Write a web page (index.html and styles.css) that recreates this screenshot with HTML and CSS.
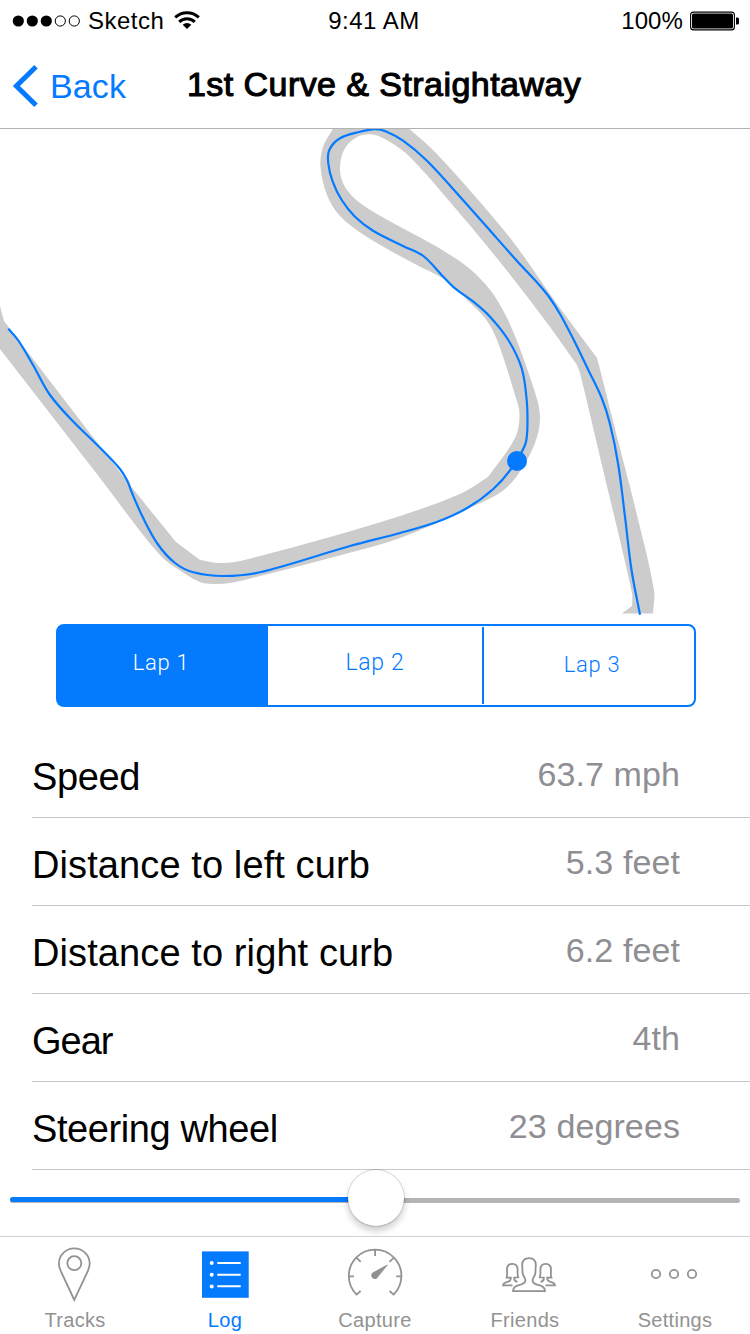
FILE: index.html
```html
<!DOCTYPE html>
<html lang="en">
<head>
<meta charset="utf-8">
<title>1st Curve &amp; Straightaway</title>
<link rel="stylesheet" href="styles.css">
</head>
<body>
<div class="screen">
  <header class="header">
    <div class="status">
      <div class="carrier">
        <svg class="signal" width="70" height="14" viewBox="0 0 70 14">
          <circle cx="6.3" cy="7" r="5.6"/><circle cx="20.3" cy="7" r="5.6"/><circle cx="34.3" cy="7" r="5.6"/>
          <circle class="off" cx="48.3" cy="7" r="5.1"/><circle class="off" cx="62.3" cy="7" r="5.1"/>
        </svg>
        <span class="carrier-name">Sketch</span>
        <svg class="wifi" width="26" height="18" viewBox="0 0 26 18">
          <path class="arc" d="M1.2 6.4A17 17 0 0 1 24.8 6.4"/>
          <path class="arc" d="M5.2 10.9A11 11 0 0 1 20.8 10.9"/>
          <path d="M13 17.9L8.7 13.8A6.2 6.2 0 0 1 17.3 13.8Z"/>
        </svg>
      </div>
      <div class="clock">9:41 AM</div>
      <div class="power">
        <span>100%</span>
        <svg width="50" height="20" viewBox="0 0 50 20">
          <rect class="shell" x=".6" y="1.1" width="43.8" height="17.8" rx="3"/>
          <rect x="2" y="2.6" width="41" height="14.8" rx="1.5"/>
          <path d="M46 6.5h1.4q1.6 0 1.6 1.6v3.8q0 1.6-1.6 1.6H46z"/>
        </svg>
      </div>
    </div>
    <nav class="nav">
      <a class="back">
        <svg width="26" height="42" viewBox="0 0 26 42"><path d="M24 1.8L4.4 21L24 40.2"/></svg>
        <span>Back</span>
      </a>
      <h1 class="title">1st Curve &amp; Straightaway</h1>
    </nav>
  </header>

  <svg class="map" width="750" height="486" viewBox="0 129 750 486">
    <path id="road" class="road"/>
    <path id="line" class="line"/>
    <circle class="car" cx="517" cy="461" r="10"/>
  </svg>

  <div class="laps">
    <div class="lap lap-on">Lap 1</div>
    <div class="lap lap-mid">Lap 2</div>
    <div class="lap lap-last">Lap 3</div>
  </div>

  <div class="rows">
    <div class="row"><span class="label snug">Speed</span><span class="value">63.7 mph</span></div>
    <div class="row"><span class="label">Distance to left curb</span><span class="value">5.3 feet</span></div>
    <div class="row"><span class="label">Distance to right curb</span><span class="value">6.2 feet</span></div>
    <div class="row"><span class="label tight">Gear</span><span class="value">4th</span></div>
    <div class="row"><span class="label snug">Steering wheel</span><span class="value">23 degrees</span></div>
  </div>

  <div class="slider">
    <div class="rail"><div class="fill"></div></div>
    <div class="thumb"></div>
  </div>

  <footer class="tabs">
    <div class="tab">
      <svg class="icon" viewBox="0 0 60 60">
        <path d="M29.3 54L15.8 25.2C14.3 22 13.9 20 13.9 17.6A15.4 15.2 0 0 1 44.7 17.6C44.7 20 44.3 22 42.8 25.2Z"/>
        <circle cx="29.3" cy="17.2" r="7"/>
      </svg>
      <span>Tracks</span>
    </div>
    <div class="tab tab-on">
      <svg class="icon list" viewBox="0 0 60 60">
        <rect x="7" y="5.4" width="46.7" height="46.4"/>
        <circle cx="16.7" cy="17" r="2"/><circle cx="16.7" cy="28.7" r="2"/><circle cx="16.7" cy="40.4" r="2"/>
        <path d="M22.3 17.1H45.7M22.3 28.7H45.7M22.3 40.3H45.7"/>
      </svg>
      <span>Log</span>
    </div>
    <div class="tab">
      <svg class="icon" viewBox="0 0 60 60">
        <path d="M15.6 45L11.6 48.6A26.3 26.3 0 1 1 48.6 48.6L44.6 45M4 30.3h5M51.2 30.3h5M30.1 4v6M11.7 11.9l4 4M48.5 11.9l-4 4"/>
        <path class="needle" d="M42.3 18.4L42.7 19L33.2 30.8A3.6 3.6 0 1 1 28.3 26.2Z"/>
      </svg>
      <span>Capture</span>
    </div>
    <div class="tab">
      <svg class="icon" viewBox="0 0 60 60">
        <path d="M18 45.2C18 42 20 40.2 24 39.2C28.5 38.2 30.6 36.3 30.4 34C30.2 31 27.6 30 27.6 26.5L27.2 19C27.2 14.5 30 12.1 34 12.1S40.8 14.5 40.8 19L40.4 26.5C40.4 30 37.8 31 37.6 34C37.4 36.3 39.5 38.2 44 39.2C48 40.2 50 42 50 45.2Z"/>
        <path d="M17.5 39.4H8C8 37.4 10 36.6 12.5 35.9C15 35.2 16 34.2 15.8 31.6H11.6C12.6 29 12 26.5 12 23.5C12 19.8 14 17.8 17.3 17.8S22.6 19.8 22.6 23.5C22.6 26.5 22.2 29 23.2 31.3L19.2 31.6C18.8 34.3 20 35.2 22.4 35.9"/>
        <path d="M50.5 39.4H60C60 37.4 58 36.6 55.5 35.9C53 35.2 52 34.2 52.2 31.6H56.4C55.4 29 56 26.5 56 23.5C56 19.8 54 17.8 50.7 17.8S45.4 19.8 45.4 23.5C45.4 26.5 45.8 29 44.8 31.3L48.8 31.6C49.2 34.3 48 35.2 45.6 35.9"/>
      </svg>
      <span>Friends</span>
    </div>
    <div class="tab">
      <svg class="icon" viewBox="0 0 60 60">
        <circle cx="11" cy="28" r="4.2"/><circle cx="29" cy="28" r="4.2"/><circle cx="47" cy="28" r="4.2"/>
      </svg>
      <span>Settings</span>
    </div>
  </footer>
</div>
<script src="track.js"></script>
</body>
</html>
```

FILE: styles.css
```css
body {
  margin: 0;
  background: #fff;
  font-family: "Liberation Sans", Arial, sans-serif;
}

.screen {
  width: 750px;
  height: 1334px;
  display: flex;
  flex-direction: column;
  overflow: hidden;
}

.header {
  box-sizing: border-box;
  height: 129px;
  border-bottom: 1px solid #b2b2b2;
}

.status {
  display: grid;
  grid-template-columns: 1fr auto 1fr;
  align-items: center;
  height: 41px;
  padding: 0 11px 0 12px;
  font-size: 24px;
  line-height: 41px;
  letter-spacing: .5px;
}

.carrier, .power {
  display: flex;
  align-items: center;
}

.carrier-name { padding: 0 10px 0 6px; }
.clock { padding-right: 3px; }
.power {
  justify-content: flex-end;
  gap: 7px;
  letter-spacing: .1px;
}
.power svg { margin-right: -1px; }
.off, .arc, .shell { fill: none; stroke: #000; }
.off { stroke-width: 1; }
.arc { stroke-width: 3; }
.shell { stroke-width: 1.1; }
.wifi { padding-bottom: 2px; }

.nav {
  display: grid;
  grid-template-columns: 187px 1fr;
  align-items: start;
  height: 87px;
}

.back {
  display: flex;
  align-items: center;
  gap: 12px;
  padding: 24px 0 0 12px;
  color: #047aff;
  font-size: 34px;
  line-height: 42px;
  letter-spacing: .1px;
}

.back path {
  fill: none;
  stroke: #047aff;
  stroke-width: 5;
}

.title {
  margin: 0;
  padding-top: 22px;
  font-size: 34px;
  line-height: 42px;
  font-weight: 400;
  letter-spacing: .44px;
  -webkit-text-stroke: 1.1px #000;
  white-space: nowrap;
}

.map { display: block; flex: none; }
.road { fill: #ccc; }
.line { fill: none; stroke: #047aff; stroke-width: 2.2; }
.car { fill: #047aff; }

.laps {
  box-sizing: border-box;
  display: grid;
  grid-template-columns: 210px 216px 1fr;
  flex: none;
  width: 640px;
  height: 83px;
  margin: 9px 0 0 56px;
  border: 2px solid #047aff;
  border-radius: 8px;
  color: #047aff;
  font-family: Roboto, "Liberation Sans", sans-serif;
  font-weight: 300;
  font-size: 22px;
  line-height: 73px;
  letter-spacing: .7px;
  text-align: center;
}

.lap-on {
  padding-right: 4px;
  background: #047aff;
  color: #fff;
}
.lap-mid {
  margin: 1px 0;
  border-right: 2px solid #047aff;
  font-size: 23px;
  line-height: 71px;
}
.lap-last {
  padding-left: 6px;
  line-height: 77px;
}

.rows {
  flex: none;
  margin: 23px 0 0 32px;
}

.row {
  box-sizing: border-box;
  display: flex;
  justify-content: space-between;
  align-items: flex-start;
  height: 88px;
  padding-right: 70px;
  border-bottom: 1px solid #c8c7cc;
}

.label {
  padding-top: 25px;
  font-size: 38px;
  line-height: 44px;
  letter-spacing: .1px;
}

.snug { letter-spacing: -.4px; }
.tight { letter-spacing: -1px; }

.value {
  padding-top: 22px;
  color: #8e8e93;
  font-size: 34px;
  line-height: 44px;
  letter-spacing: .1px;
}

.slider {
  position: relative;
  flex: none;
  height: 66px;
  padding: 0 10px;
}

.rail {
  box-sizing: border-box;
  position: relative;
  top: 28px;
  height: 5px;
  border-radius: 3px;
  background: #b4b4b4;
}

.fill {
  position: absolute;
  top: -1px;
  left: 0;
  width: 366px;
  height: 5px;
  border-radius: 3px;
  background: #047aff;
}

.thumb {
  position: absolute;
  top: 0;
  left: 348px;
  width: 56px;
  height: 56px;
  border-radius: 50%;
  background: #fff;
  box-shadow: 0 0 0 1px rgba(0, 0, 0, .13), 0 5px 7px rgba(0, 0, 0, .2);
}

.tabs {
  box-sizing: border-box;
  display: grid;
  grid-template-columns: repeat(5, 150px);
  flex: none;
  height: 98px;
  border-top: 1px solid #d2d2d2;
  color: #929292;
}

.tab {
  display: flex;
  flex-direction: column;
  align-items: center;
  padding-top: 9px;
  font-size: 20px;
  line-height: 28px;
  letter-spacing: .3px;
}

.tab-on { color: #047aff; }

.icon {
  width: 60px;
  height: 60px;
  fill: none;
  stroke: #929292;
  stroke-width: 1.8;
  overflow: visible;
}

.needle { fill: #929292; stroke: none; }
.list rect { fill: #047aff; stroke: none; }
.list circle { fill: #fff; stroke: none; }
.list path { stroke: #fff; stroke-width: 2; }
```

FILE: track.js
```js
// Builds a smooth path (Catmull-Rom) through each run of points.
function smooth(points, command) {
  var d = command + points[0][0] + ' ' + points[0][1];
  for (var i = 0; i < points.length - 1; i++) {
    var p0 = points[i - 1] || points[i];
    var p1 = points[i];
    var p2 = points[i + 1];
    var p3 = points[i + 2] || p2;
    var dist = Math.hypot(p2[0] - p1[0], p2[1] - p1[1]);
    var a = Math.hypot(p2[0] - p0[0], p2[1] - p0[1]) || 1;
    var b = Math.hypot(p3[0] - p1[0], p3[1] - p1[1]) || 1;
    d += 'C' + [
      p1[0] + (p2[0] - p0[0]) / a * dist / 3,
      p1[1] + (p2[1] - p0[1]) / a * dist / 3,
      p2[0] - (p3[0] - p1[0]) / b * dist / 3,
      p2[1] - (p3[1] - p1[1]) / b * dist / 3,
      p2[0], p2[1]
    ].map(function (n) { return n.toFixed(1); }).join(' ');
  }
  return d;
}

// Infield side, then the outer side from the finish back to the start.
var edges = [
  [[0, 306], [4, 321]],
  [[4, 321], [66, 402], [130, 485], [176, 542]],
  [[176, 542], [200, 560]],
  [[200, 560], [218, 563], [235, 562], [260, 556], [330, 537], [400, 516], [460, 494], [488, 477]],
  [[488, 477], [515, 438], [519.5, 414], [515, 395], [497, 340], [485, 318], [467, 300], [447, 281], [413, 263], [367, 237], [340, 216], [327, 195], [320.5, 167], [323, 147], [334, 127]],
  [[406, 126], [433, 150], [473, 194], [514, 243], [557, 304], [597, 358]],
  [[597, 358], [601, 373], [617, 437], [634, 503], [654, 590], [653, 613.5]],
  [[622, 613.5], [632, 606]],
  [[632, 606], [632, 593], [600, 457], [580, 373], [577, 365]],
  [[577, 365], [550, 327], [500, 262], [450, 202], [410, 157], [390, 142], [373, 134.5], [357, 137], [344, 150], [340, 170], [345, 187], [360, 203], [393, 223], [423, 239], [447, 253], [470, 269], [491, 291], [505, 314], [515, 336], [524, 360], [537, 399], [540, 417], [537, 437], [527, 460], [513, 481], [498, 494], [467, 509], [400, 538], [330, 558], [260, 576], [233, 582.5], [213, 584], [200, 582], [187, 575], [160, 555], [100, 478], [0, 349]]
];

var driven = [[8.3, 328.8], [18, 340], [33, 365], [50, 395], [71.7, 420], [100, 447.7], [120, 469], [127.3, 480.7], [131.7, 492.3], [143.3, 518.3], [158, 544.5], [175, 563], [193.3, 572.3], [223.3, 576], [260, 572.3], [350, 546], [400, 533], [436.7, 522], [466.7, 508.3], [493.3, 489], [511.7, 468], [525, 445], [527.3, 430], [526.7, 400], [521.7, 368.3], [508.3, 340], [490, 316.7], [473.3, 301.7], [455, 288.3], [443.3, 276.7], [423.3, 256], [403, 246], [373, 230.7], [355, 216.7], [341.7, 200], [332.7, 181.7], [328.3, 163.3], [329.3, 150], [340, 138.3], [360, 131.8], [375, 129.2], [386.7, 131.7], [403, 140.7], [426.7, 160.5], [460, 196.7], [490, 230.5], [517, 261], [538, 283.5], [549.5, 297.5], [560, 314], [573.3, 339], [588.3, 370], [601.5, 397.5], [610, 424], [618.3, 465], [625, 516.7], [631.5, 570], [640, 614.7]];

document.getElementById('road').setAttribute('d', edges.map(function (run, i) {
  return smooth(run, i ? 'L' : 'M');
}).join('') + 'Z');
document.getElementById('line').setAttribute('d', smooth(driven, 'M'));
```
